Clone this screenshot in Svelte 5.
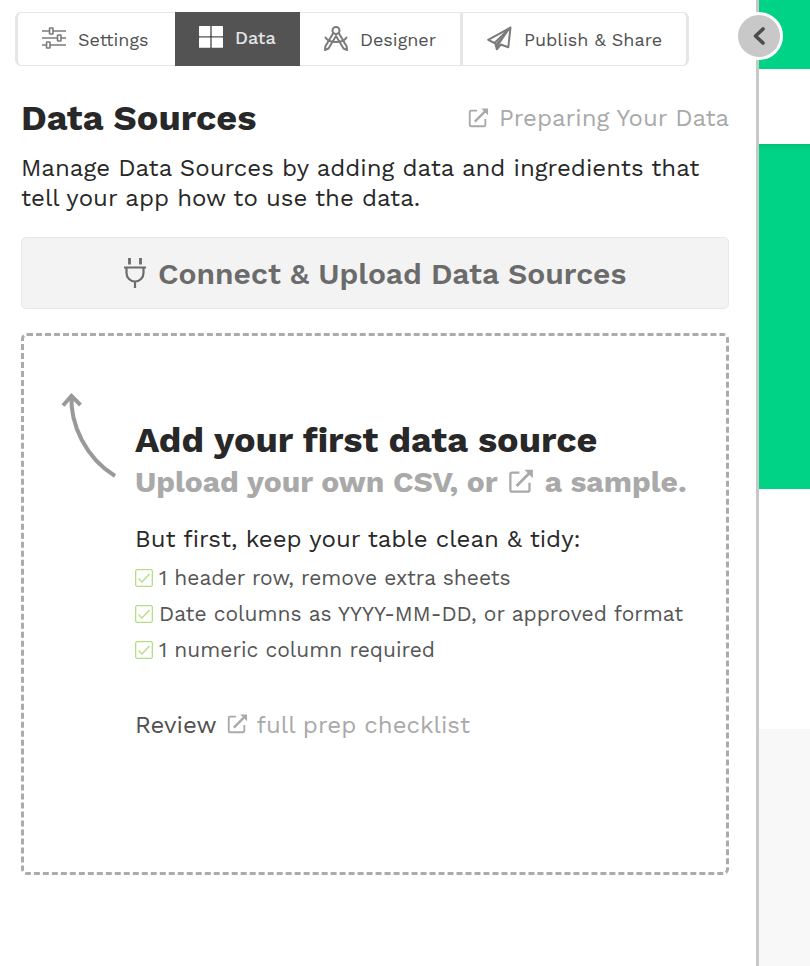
<script>
  const checks = [
    '1 header row, remove extra sheets',
    'Date columns as YYYY-MM-DD, or approved format',
    '1 numeric column required'
  ];
</script>

{#snippet external(size)}
  <svg class="external" width={size} height={size} viewBox="0 0 24 24" fill="none" stroke="currentColor" stroke-width="2">
    <path d="M11 4H4.500Q3 4 3 5.500v14Q3 21 4.500 21h14Q20 21 20 19.500V13" />
    <path d="M8.500 16 20 4.500" stroke-width="2.500" />
    <path d="M15.500 1.500H23V9z" fill="currentColor" stroke="none" />
  </svg>
{/snippet}

<div class="app">
  <main class="panel">
    <nav class="tabs">
      <div class="tab settings">
        <svg width="26" height="24" viewBox="0 0 26 24" fill="none" stroke="#7b7b7b" stroke-width="1.600">
          <path d="M1 4h7.500M12 4h13M1 11h15.500M20 11h5M1 18h4.500M9 18h16" />
          <rect x="8.500" y="1" width="3.500" height="6" rx=".5" />
          <rect x="16.500" y="8" width="3.500" height="6" rx=".5" />
          <rect x="5.500" y="15" width="3.500" height="6" rx=".5" />
        </svg>
        <span>Settings</span>
      </div>
      <div class="tab data">
        <svg width="24" height="22" viewBox="0 0 24 22" fill="#fff">
          <rect width="11.300" height="10.200" rx=".6" /><rect x="12.700" width="11.300" height="10.200" rx=".6" />
          <rect y="11.600" width="11.300" height="10.200" rx=".6" /><rect x="12.700" y="11.600" width="11.300" height="10.200" rx=".6" />
        </svg>
        <span>Data</span>
      </div>
      <div class="tab designer">
        <svg width="24" height="25" viewBox="0 0 24 25" fill="none" stroke="#7b7b7b" stroke-width="2" stroke-linejoin="round" stroke-linecap="round">
          <circle cx="12" cy="4.500" r="3.500" />
          <path d="M9.300 7 1.300 20.500 1 24l3.500-1.500L12 10l7.500 12.500L23 24l-.3-3.500L14.700 7" />
          <path d="M1.500 11.500C5 17.500 19 17.500 22.500 11.500" />
        </svg>
        <span>Designer</span>
      </div>
      <div class="tab publish">
        <svg width="25" height="25" viewBox="0 0 25 25" fill="none" stroke="#7b7b7b" stroke-width="2" stroke-linejoin="round">
          <path d="M23.500 1.500 1.200 13.800l6.300 3.200L23.500 1.500l-2.200 19.700-7.500-2.700-4 4.800-1.500-6" />
          <path d="M23.500 1.500 9.300 17.500l.3 5.800 2.800-5.400z" fill="#7b7b7b" stroke-width=".8" />
        </svg>
        <span>Publish &amp; Share</span>
      </div>
    </nav>

    <header class="heading">
      <h1>Data Sources</h1>
      <a class="prep">{@render external(22)}<span>Preparing Your Data</span></a>
    </header>

    <p class="intro">Manage Data Sources by adding data and ingredients that<br />tell your app how to use the data.</p>

    <button class="connect">
      <svg width="22" height="30" viewBox="0 0 22 30" fill="none" stroke="#6b6b6b" stroke-width="2.200">
        <path d="M5.500 0v6.500M16.500 0v6.500" stroke-width="2.800" />
        <path d="M0 9.500h22M2.500 9.500v5.500a8.500 8.500 0 0 0 17 0V9.500M11 23.500V30" />
      </svg>
      <span>Connect &amp; Upload Data Sources</span>
    </button>

    <section class="empty">
      <svg class="arrow" width="58" height="90" viewBox="0 0 58 90" fill="none" stroke="#999" stroke-width="4">
        <path d="M11.500 3C10 33 26 66 55 84" />
        <path d="M3 13.500 11.500 4l9 9" />
      </svg>
      <div class="copy">
        <h2>Add your first data source</h2>
        <h3><span>Upload your own CSV, or</span>{@render external(27)}<span>a sample.</span></h3>
        <p class="first">But first, keep your table clean &amp; tidy:</p>
        <ul>
          {#each checks as text}
            <li>
              <svg width="18" height="18" viewBox="0 0 18 18" fill="none" stroke="#b4dd84" stroke-width="1.300">
                <rect x=".65" y=".65" width="16.700" height="16.700" rx="1.500" />
                <path d="m3.500 9.500 3.500 3.500 7.500-8" />
              </svg>
              <span>{text}</span>
            </li>
          {/each}
        </ul>
        <p class="review"><span>Review</span>{@render external(22)}<span class="checklist">full prep checklist</span></p>
      </div>
    </section>
  </main>

  <aside class="preview">
    <div class="top"></div>
    <div class="bar"></div>
    <div class="hero"></div>
    <div class="body"></div>
    <div class="foot"></div>
  </aside>

  <div class="toggle">
    <svg width="12" height="18" viewBox="0 0 12 18" fill="none" stroke="#4c4c4c" stroke-width="3.600" stroke-linecap="round" stroke-linejoin="round">
      <path d="M10 2 2.500 9l7.500 7" />
    </svg>
  </div>
</div>

<style>
  :global(body) { margin: 0; background: #fff; }
  .app {
    position: relative; display: flex; width: 810px; height: 966px; overflow: hidden;
    font-family: "Work Sans", Inter, "Open Sans", sans-serif; color: #282828; background: #fff;
  }
  .app * { box-sizing: border-box; }
  svg { display: block; flex: none; }
  span, h1, h2, p { white-space: nowrap; }
  h1, h2, h3, p, ul { margin: 0; padding: 0; }
  .panel { width: 756px; flex: none; padding: 12px 0 0 21px; }
  .tabs {
    display: flex; width: 674px; height: 54px; margin-left: -6px;
    border: 1px solid #e6e6e6; border-width: 1px 3px 1px 3px; border-radius: 6px;
  }
  .tab { display: flex; align-items: center; font-size: 18px; color: #505050; font-weight: 450; }
  .settings { width: 157px; padding-left: 23px; }
  .settings span { margin-left: 11px; padding-top: 1px; }
  .data { width: 125px; margin: -1px 0; padding: 0 0 5px 24px; background: #535353; color: #e4e4e4; font-weight: 550; }
  .data span { margin-left: 12px; padding-top: 2px; }
  .designer { width: 163px; padding-left: 24px; border-right: 3px solid #e6e6e6; }
  .designer svg { margin-top: -2px; }
  .designer span { margin-left: 12px; padding-top: 1px; }
  .publish { padding-left: 24px; }
  .publish svg { margin-top: -2px; }
  .publish span { margin-left: 12px; padding-top: 1px; }
  .heading { display: flex; justify-content: space-between; align-items: center; width: 708px; height: 44px; margin-top: 30px; }
  h1, h2 { font-size: 36px; line-height: 44px; font-weight: 700; }
  .prep { display: flex; align-items: center; width: 262px; color: #a9a9a9; font-size: 24px; }
  .prep span { margin-left: 10px; margin-top: -1px; }
  .intro { margin-top: 13px; font-size: 24px; line-height: 30px; }
  .connect {
    display: flex; align-items: center; width: 708px; height: 72px; margin-top: 24px; padding: 0 0 0 102px;
    border: 1px solid #e8e8e8; border-radius: 5px; background: #f3f3f3; color: #6b6b6b;
    font: 600 30px "Work Sans", Inter, sans-serif;
  }
  .connect span { margin-left: 12px; padding-top: 1px; }
  .empty { display: flex; width: 708px; height: 542px; margin-top: 24px; padding: 0 0 0 36px; border: 3px dashed #ababab; border-radius: 6px; }
  .arrow { margin: 56px 17px 0 0; }
  .copy { padding-top: 82px; }
  h3 { display: flex; align-items: center; height: 40px; color: #a9a9a9; font-size: 30px; font-weight: 700; }
  h3 span { margin-top: -1px; }
  h3 .external { margin: -2px 11px 0 9px; }
  .first { margin-top: 22px; font-size: 24px; line-height: 30px; }
  ul { margin-top: 6px; list-style: none; }
  li { display: flex; align-items: center; height: 36px; font-size: 21px; color: #555; }
  li svg { margin-top: -1px; }
  li span { margin: -1px 0 0 6px; }
  .review { display: flex; align-items: center; height: 30px; margin-top: 42px; font-size: 24px; color: #505050; }
  .review .external { margin: -2px 9px 0 9px; color: #a9a9a9; }
  .checklist { color: #a9a9a9; }
  .preview { display: flex; flex-direction: column; flex: 1; border-left: 3px solid #c8c8c8; }
  .top { height: 69px; background: #00d386; }
  .bar { height: 75px; background: #fff; }
  .hero { height: 345px; background: linear-gradient(#00c07a, #00d386 6px); }
  .body { height: 240px; background: #fff; }
  .foot { flex: 1; background: #f8f8f8; }
  .toggle {
    position: absolute; left: 735px; top: 12px; width: 48px; height: 48px; padding-right: 1px; display: flex; align-items: center; justify-content: center;
    border: 3px solid #fff; border-radius: 50%; background: #c8c8c8;
  }
</style>
